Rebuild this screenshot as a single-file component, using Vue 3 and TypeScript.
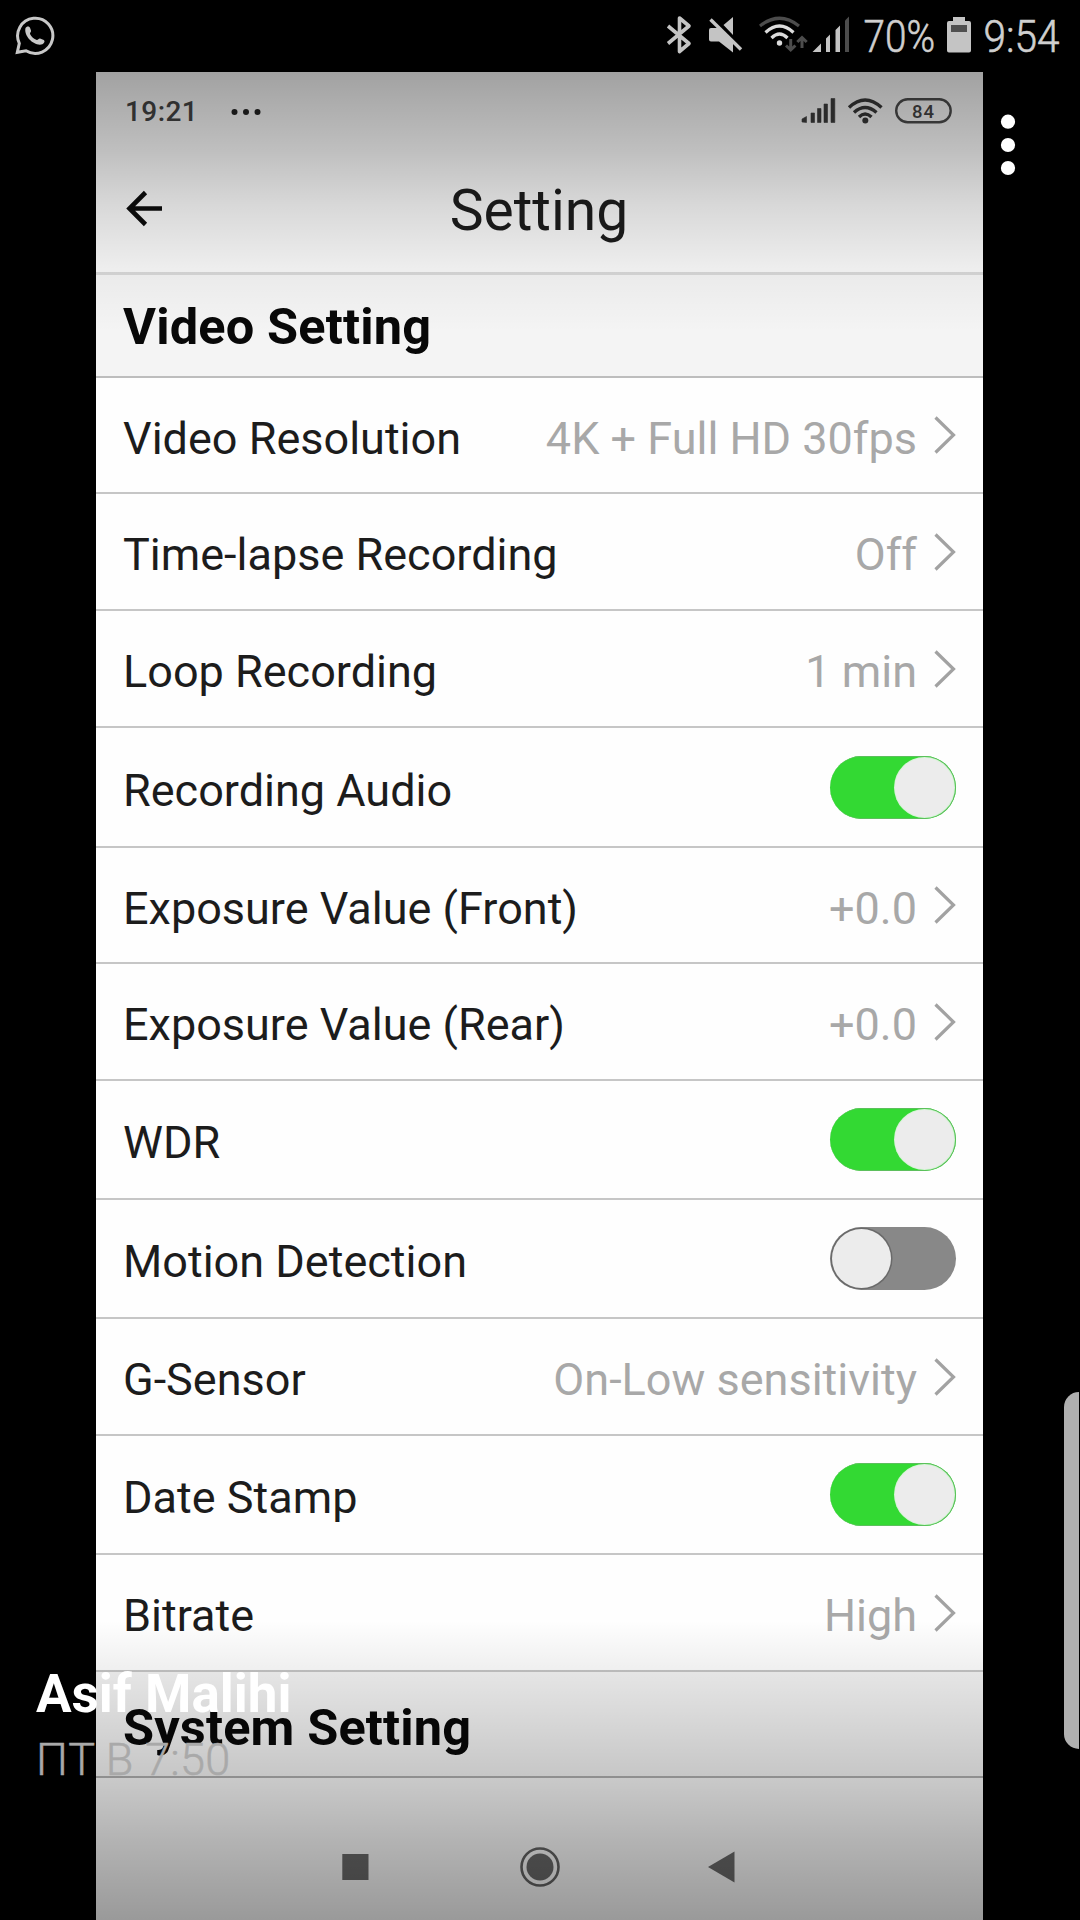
<script setup lang="ts">
interface Row {
  label: string
  value?: string
  on?: boolean
  height: number
}

const rows: Row[] = [
  { label: 'Video Resolution', value: '4K + Full HD 30fps', height: 116 },
  { label: 'Time-lapse Recording', value: 'Off', height: 117 },
  { label: 'Loop Recording', value: '1 min', height: 117 },
  { label: 'Recording Audio', on: true, height: 120 },
  { label: 'Exposure Value (Front)', value: '+0.0', height: 116 },
  { label: 'Exposure Value (Rear)', value: '+0.0', height: 117 },
  { label: 'WDR', on: true, height: 119 },
  { label: 'Motion Detection', on: false, height: 119 },
  { label: 'G-Sensor', value: 'On-Low sensitivity', height: 117 },
  { label: 'Date Stamp', on: true, height: 119 },
  { label: 'Bitrate', value: 'High', height: 117 },
]
</script>

<template>
  <div class="screen">
    <header class="device-bar">
      <svg class="whatsapp" width="42" height="42" viewBox="14 14 42 42" fill="none">
        <path d="M17.300 52.300 19.300 43.300A17.600 17.600 0 1 1 26 50.800Z" stroke="#c8c8c8" stroke-width="3" />
        <path d="M25.500 28c.8-1.800 3.600-2.200 4.400-.4l1.100 3c.4 1.400-1.300 2.300-1 3.300 1.500 3 3.800 5 6.800 6 1.200.2 2-1.800 3.300-1.400l3.700 1.500c1.500 1 .6 3.200-1.400 4.200-7.400 2.700-19-7.600-16.900-16.200Z" fill="#c8c8c8" />
      </svg>
      <svg class="device-icons" width="420" height="72" viewBox="660 0 420 72" fill="none">
        <path d="M668 26 689 43.500 679.500 51.500V18L689 26 668 43.500" stroke="#c4c4c4" stroke-width="3.600" stroke-linejoin="round" />
        <path d="M711 28H718L733 43V52.500L719 41.500H711Q709 41.500 709 39.500V30Q709 28 711 28ZM723.500 25 733 17V35Z" fill="#c4c4c4" />
        <path d="M710.500 19.500 741 49.500" stroke="#c4c4c4" stroke-width="3.400" />
        <path d="M760 26Q779.500 10.500 799 26" stroke="#4c4c4c" stroke-width="3.200" />
        <path d="M765.500 32.500Q779.500 19.500 793.500 32.500M771.500 38Q779.500 30 787.500 38" stroke="#dcdcdc" stroke-width="3.200" />
        <circle cx="779.500" cy="43" r="2.700" fill="#dcdcdc" />
        <path d="M790.700 39V50M786 45.500 790.700 50 795.400 45.500M802 48V37.500M797.300 42 802 37.500 806.700 42" stroke="#4c4c4c" stroke-width="3" />
        <path d="M812.500 52 821 43.500V52ZM826 38.500 830 34.500V52H826ZM835.500 30 840 25.500V52H835.500Z" fill="#c4c4c4" />
        <path d="M845 20.500 849 16.500V52H845Z" fill="#4c4c4c" />
        <text x="863.500" y="52" textLength="71.500" lengthAdjust="spacingAndGlyphs" class="device-text">70%</text>
        <path d="M953 17H965V21H969Q971 21 971 23V50.500Q971 52.500 969 52.500H949Q947 52.500 947 50.500V23Q947 21 949 21H953Z" fill="#c4c4c4" />
        <path d="M951 25H967V32H951Z" fill="#505050" />
        <text x="983.500" y="52" textLength="76" lengthAdjust="spacingAndGlyphs" class="device-text">9:54</text>
      </svg>
    </header>

    <main class="viewer">
      <section class="phone">
        <div class="phone-status">
          <span class="clock">19:21</span>
          <svg class="more" width="30" height="8" viewBox="0 0 30 8" fill="#222">
            <circle cx="3.500" cy="4" r="3" /><circle cx="15" cy="4" r="3" /><circle cx="26.500" cy="4" r="3" />
          </svg>
          <svg class="phone-icons" width="152" height="28" viewBox="801 97 152 28" fill="none">
            <path d="M802 122V119L806.500 116.500V122.500ZM811 113H814.500V122.500H811ZM817.500 108.500H821V122.500H817.500ZM824 104H827.500V122.500H824ZM831 98.500H834.800V122.500H831Z" fill="#3c3c3c" stroke="#3c3c3c" stroke-width="0.600" />
            <path d="M849 107.500Q865 92.500 881.500 107.500M854 112.500Q865 102.500 876.500 112.500M859 117Q865 111 871.500 117" stroke="#383838" stroke-width="3.400" />
            <circle cx="865.300" cy="120.500" r="3" fill="#383838" />
            <rect x="896.200" y="99.200" width="54.500" height="23" rx="11.500" stroke="#4c4c4c" stroke-width="2.400" />
            <text x="912" y="117.500" class="battery-text" textLength="22">84</text>
          </svg>
        </div>

        <div class="title-bar">
          <svg class="back" width="38" height="38" viewBox="0 0 38 38" fill="none" stroke="#0c0c0c" stroke-width="4.600">
            <path d="M19.500 2.500 3.500 18.500 19.500 34.500M3.500 18.500H36" />
          </svg>
          <h1>Setting</h1>
        </div>

        <h2 class="section-title first"><span>Video Setting</span></h2>
        <div v-for="row in rows" :key="row.label" class="row" :style="{ height: row.height + 'px' }">
          <span class="label">{{ row.label }}</span>
          <template v-if="row.value">
            <span class="value">{{ row.value }}</span>
            <svg class="chevron" width="22" height="38" viewBox="0 0 22 38" fill="none" stroke="#a2a2a2" stroke-width="3.200">
              <path d="M1.500 1.500 19.500 19 1.500 36.500" />
            </svg>
          </template>
          <span v-else class="toggle" :class="{ on: row.on }"><i></i></span>
        </div>
        <h2 class="section-title last"><span>System Setting</span></h2>

        <nav class="nav">
          <svg width="887" height="60" viewBox="96 1837 887 60" fill="none">
            <rect x="342.300" y="1854" width="26.200" height="26" fill="#686868" />
            <circle cx="540" cy="1867" r="18.500" stroke="#626262" stroke-width="2.600" />
            <circle cx="540" cy="1867" r="13.500" fill="#686868" />
            <path d="M708 1867 734.500 1851.500V1882.500Z" fill="#686868" />
          </svg>
        </nav>
        <div class="shade"></div>
      </section>

      <svg class="menu" width="16" height="62" viewBox="0 0 16 62" fill="#fff">
        <circle cx="8" cy="7.700" r="7.100" /><circle cx="8" cy="31" r="7.100" /><circle cx="8" cy="54" r="7.100" />
      </svg>
    </main>

    <div class="caption">
      <div class="author">Asif Malihi</div>
      <div class="date">ПТ В 7:50</div>
    </div>
    <div class="edge-handle"></div>
  </div>
</template>

<style>
body { background: #000; }
</style>

<style scoped>
.screen {
  position: relative;
  width: 1080px;
  height: 1920px;
  overflow: hidden;
  background: #000;
  font-family: Roboto, "Liberation Sans", sans-serif;
}
.device-bar { height: 72px; display: flex; justify-content: space-between; }
.whatsapp { margin: 14px 0 0 14px; }
.device-icons { flex: none; }
.device-text { font-size: 45px; font-weight: 300; fill: #cfcfcf; stroke: #cfcfcf; stroke-width: 0.6px; }
.viewer { display: flex; height: 1848px; padding-left: 96px; }
.phone {
  position: relative;
  display: flex;
  flex-direction: column;
  width: 887px;
  height: 1848px;
  background: #f8f8f8;
}
.phone-status {
  height: 78px;
  display: flex;
  align-items: center;
  padding: 0 30px 0 29px;
  box-sizing: border-box;
}
.clock { width: 106px; padding-top: 2px; font-size: 28px; font-weight: 500; line-height: 28px; letter-spacing: 0.4px; color: #444; }
.more { margin-top: 1px; }
.phone-icons { margin-left: auto; }
.battery-text { font-size: 18.500px; font-weight: 500; fill: #444; }
.title-bar {
  display: flex;
  align-items: center;
  height: 125px;
  padding: 0 29px 0 30px;
  box-sizing: border-box;
  border-bottom: 3px solid #d8d8d8;
}
.back { margin-top: -4px; }
h1 { flex: 1; margin: 0 40px 0 0; text-align: center; font-size: 57px; font-weight: 400; line-height: 66px; color: #1c1c1c; }
.section-title {
  display: flex;
  align-items: center;
  margin: 0;
  padding-left: 27px;
  box-sizing: border-box;
  font-size: 50.500px;
  font-weight: 700;
  letter-spacing: 0.15px;
  color: #080808;
  background: #f4f4f4;
  border-bottom: 2px solid #bdbdbd;
}
.section-title.first { height: 103px; padding-top: 2px; }
.section-title.last { height: 106px; padding-top: 6px; border-color: #b0b0b0; }
.row {
  display: flex;
  align-items: center;
  box-sizing: border-box;
  padding: 0 27px;
  background: #fefefe;
  border-bottom: 2px solid #c6c6c6;
  font-size: 45px;
  line-height: 54px;
  white-space: nowrap;
}
.label { color: #1c1c1c; padding-top: 7px; }
.value { margin-left: auto; padding-top: 7px; color: #a8a8a8; }
.chevron { margin-left: 17px; }
.toggle {
  display: flex;
  justify-content: flex-start;
  align-items: center;
  width: 126px;
  height: 63px;
  margin-left: auto;
  box-sizing: border-box;
  border-radius: 32px;
  background: #888;
}
.toggle i { width: 59px; height: 59px; margin: 0 2px; border-radius: 50%; background: #ececec; box-shadow: 0 0 0 1.500px #6a6a6a; }
.toggle.on { justify-content: flex-end; background: #33d933; box-shadow: inset -1px 0 0 1px #5cbf5c; }
.toggle.on i { background: #ececec; box-shadow: 0 0 0 1px #d9f3d9; }
.nav { display: flex; flex: 1; align-items: flex-start; padding-top: 59px; }
.shade {
  position: absolute;
  inset: 0;
  background: linear-gradient(to bottom,
    rgba(0, 0, 0, 0.35) 0, rgba(0, 0, 0, 0.23) 78px, rgba(0, 0, 0, 0.13) 133px,
    rgba(0, 0, 0, 0.045) 195px, rgba(0, 0, 0, 0) 260px,
    rgba(0, 0, 0, 0) 1548px, rgba(0, 0, 0, 0.06) 1598px,
    rgba(0, 0, 0, 0.19) 1706px, rgba(0, 0, 0, 0.28) 1768px, rgba(0, 0, 0, 0.38) 1848px);
}
.menu { margin: 42px 0 0 17px; }
.caption { position: absolute; left: 36px; top: 1664px; white-space: nowrap; }
.author { font-size: 53px; font-weight: 700; line-height: 60px; color: #fff; }
.date { margin-top: 9px; font-size: 45px; font-weight: 300; line-height: 54px; letter-spacing: 0.3px; color: #a9a9a9; -webkit-text-stroke: 0.5px #a9a9a9; }
.edge-handle {
  position: absolute;
  left: 1064px;
  top: 1392px;
  width: 15px;
  height: 357px;
  border-radius: 16px 0 0 16px;
  background: #b0b0b0;
}
</style>
